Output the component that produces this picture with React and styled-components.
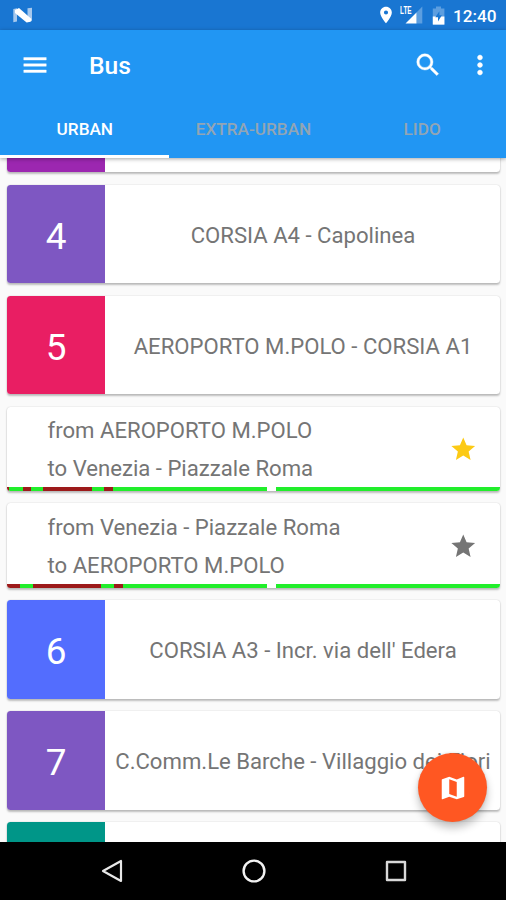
import React from "react";
import styled, { createGlobalStyle } from "styled-components";

const GlobalStyle = createGlobalStyle`
  * { box-sizing: border-box; }
  body { margin: 0; background: #fafafa; font-family: Roboto, "Liberation Sans", sans-serif; }
  svg { display: block; flex: none; }
`;

const Screen = styled.div`
  position: relative;
  width: 506px;
  height: 900px;
  display: flex;
  flex-direction: column;
  overflow: hidden;
  background: #fafafa;
`;

const StatusBar = styled.div`
  height: 30px;
  flex: none;
  display: flex;
  align-items: center;
  justify-content: space-between;
  padding: 0 9px 0 12px;
  background: #1976d2;
  color: #fff;
`;

const StatusIcons = styled.div`
  display: flex;
  align-items: center;
  height: 30px;
`;

const Clock = styled.span`
  width: 44px;
  margin-left: 8px;
  font-size: 17.2px;
  font-weight: 500;
  line-height: 30px;
  padding-top: 2px;
  white-space: nowrap;
`;

const Header = styled.header`
  position: relative;
  z-index: 1;
  flex: none;
  height: 128px;
  background: #2196f3;
  box-shadow: 0 1px 4px rgba(0, 0, 0, 0.35);
`;

const Toolbar = styled.div`
  height: 69px;
  display: flex;
  align-items: center;
  padding: 0 11px 0 20px;
`;

const Title = styled.h1`
  flex: 1;
  margin: 3px 0 0 39px;
  font-size: 24.6px;
  line-height: 30px;
  font-weight: 500;
  color: #fff;
`;

const IconButton = styled.button`
  display: flex;
  padding: 0;
  margin: 0 0 0 ${(p) => p.$gap || 0}px;
  border: 0;
  background: none;
  color: #fff;
`;

const Tabs = styled.nav`
  height: 59px;
  display: grid;
  grid-template-columns: repeat(3, 1fr);
`;

const Tab = styled.div`
  display: flex;
  align-items: center;
  justify-content: center;
  padding: 4px 0 0 1px;
  border-bottom: 3px solid ${(p) => (p.$active ? "#fff" : "transparent")};
  font-size: 17.2px;
  font-weight: 500;
  color: ${(p) => (p.$active ? "#fff" : "#92a5b4")};
`;

const Viewport = styled.main`
  flex: 1;
  min-height: 0;
  overflow: hidden;
  padding: 0 6px 0 7px;
`;

const List = styled.div`
  display: flex;
  flex-direction: column;
  gap: 12.4px;
  margin-top: -84.2px;
`;

const Card = styled.div`
  flex: none;
  background: #fff;
  border-radius: 3.5px;
  box-shadow: 0 1.5px 2px rgba(0, 0, 0, 0.24), 0 0 1.5px rgba(0, 0, 0, 0.14);
  overflow: hidden;
  color: #757575;
  font-size: 22.13px;
`;

const LineCard = styled(Card)`
  display: flex;
  height: 98.6px;
`;

const LineNumber = styled.div`
  width: 98px;
  flex: none;
  display: flex;
  align-items: center;
  justify-content: center;
  padding-top: 4px;
  background: ${(p) => p.$color};
  color: #fff;
  font-size: 36.9px;
`;

const LineName = styled.div`
  flex: 1;
  display: flex;
  align-items: center;
  justify-content: center;
  padding: 1px 0 0 1px;
  white-space: nowrap;
`;

const DirectionCard = styled(Card)`
  height: 84.2px;
  display: flex;
  flex-direction: column;
`;

const DirectionBody = styled.div`
  flex: 1;
  display: flex;
  align-items: center;
  justify-content: space-between;
  padding: 4.5px 22.5px 0 40.5px;
`;

const Route = styled.div`
  line-height: 38px;
  white-space: nowrap;
`;

const Timeline = styled.div`
  display: flex;
  height: 4px;
`;

const Segment = styled.div`
  width: ${(p) => p.$w}px;
  flex: none;
  background: ${(p) => p.$color};
`;

const Fab = styled.button`
  position: absolute;
  z-index: 2;
  left: 418px;
  top: 753px;
  width: 69px;
  height: 69px;
  padding: 0;
  border: 0;
  border-radius: 50%;
  display: flex;
  align-items: center;
  justify-content: center;
  background: #ff5722;
  box-shadow: 0 6px 9px rgba(0, 0, 0, 0.24), 0 0 3px rgba(0, 0, 0, 0.12);
`;

const NavBar = styled.footer`
  height: 58px;
  flex: none;
  display: flex;
  align-items: center;
  justify-content: center;
  gap: 117px;
  padding-left: 1px;
  background: #000;
`;

const GREEN = "#21ee2b";
const RED = "#9c1a1a";

const outbound = [[2, RED], [14, GREEN], [8, RED], [12, GREEN], [49, RED], [12, GREEN], [9, RED], [154, GREEN], [8.5, "#fff"], [225, GREEN]];
const inbound = [[13, RED], [13, GREEN], [68, RED], [13, GREEN], [9, RED], [144, GREEN], [8.5, "#fff"], [225, GREEN]];

const rows = [
  { number: "", color: "#9c27b0", name: "" },
  { number: "4", color: "#7e57c2", name: "CORSIA A4 - Capolinea" },
  { number: "5", color: "#e91e63", name: "AEROPORTO M.POLO - CORSIA A1" },
  { from: "AEROPORTO M.POLO", to: "Venezia - Piazzale Roma", star: "#fcca15", segments: outbound },
  { from: "Venezia - Piazzale Roma", to: "AEROPORTO M.POLO", star: "#757575", segments: inbound },
  { number: "6", color: "#536dfe", name: "CORSIA A3 - Incr. via dell' Edera" },
  { number: "7", color: "#7e57c2", name: "C.Comm.Le Barche - Villaggio dei Fiori" },
  { number: "", color: "#009688", name: "" },
];

function Icon({ size, d, color = "#fff", stroke = 0 }) {
  return (
    <svg width={size} height={size} viewBox="0 0 24 24" fill={color} stroke={color} strokeWidth={stroke}>
      <path d={d} />
    </svg>
  );
}

const MENU = "M3 18h18v-2H3v2zm0-5h18v-2H3v2zm0-7v2h18V6H3z";
const SEARCH =
  "M15.5 14h-.79l-.28-.27A6.471 6.471 0 0 0 16 9.5 6.5 6.5 0 1 0 9.5 16c1.61 0 3.09-.59 4.23-1.57l.27.28v.79l5 4.99L20.49 19l-4.99-5zm-6 0C7.01 14 5 11.99 5 9.5S7.01 5 9.5 5 14 7.01 14 9.5 11.99 14 9.5 14z";
const MORE =
  "M12 8c1.1 0 2-.9 2-2s-.9-2-2-2-2 .9-2 2 .9 2 2 2zm0 2c-1.1 0-2 .9-2 2s.9 2 2 2 2-.9 2-2-.9-2-2-2zm0 6c-1.1 0-2 .9-2 2s.9 2 2 2 2-.9 2-2-.9-2-2-2z";
const STAR = "M12 17.27L18.18 21l-1.64-7.03L22 9.24l-7.19-.61L12 2 9.19 8.63 2 9.24l5.46 4.73L5.82 21z";
const MAP =
  "M20.5 3l-.16.03L15 5.1 9 3 3.36 4.9c-.21.07-.36.25-.36.48V20.5c0 .28.22.5.5.5l.16-.03L9 18.9l6 2.1 5.64-1.9c.21-.07.36-.25.36-.48V3.5c0-.28-.22-.5-.5-.5zM15 19l-6-2.11V5l6 2.11V19z";
const PIN =
  "M12 2C8.13 2 5 5.13 5 9c0 5.25 7 13 7 13s7-7.75 7-13c0-3.87-3.13-7-7-7zm0 9.5a2.5 2.5 0 0 1 0-5 2.5 2.5 0 0 1 0 5z";

function NougatMark() {
  return (
    <svg width="22" height="18" viewBox="0 0 22 18">
      <path d="M1.3 3 5 2.3V15.5L1.3 16.2zM15.5 2.3 20 1.8V15L15.5 16.2z" fill="#a6c8ed" />
      <path d="M3 4 7 2 19.5 13 18.5 15.8 14.6 16.6 3 7z" fill="#fff" />
    </svg>
  );
}

const Lte = styled.span`
  align-self: flex-start;
  width: 13px;
  margin: 0 -9px 0 4px;
  padding-top: 5px;
  font-family: "Liberation Sans", sans-serif;
  font-size: 11px;
  line-height: 11px;
  font-weight: 700;
  white-space: nowrap;
  transform: scaleX(0.58);
  transform-origin: left center;
`;

function Signal() {
  return (
    <svg width="19" height="18" viewBox="0 0 19 18">
      <path d="M12.5 6.5 18.3 .5V17.5H12.5z" fill="#5c9ee0" />
      <path d="M1.5 17.5 12.5 6.5V17.5z" fill="#fff" />
    </svg>
  );
}

const BatterySvg = styled.svg`
  margin-left: 9px;
`;

function Battery() {
  return (
    <BatterySvg width="13" height="19" viewBox="0 0 13 19">
      <path d="M4 .5H9V2.5H12.4V18.6H.8V2.5H4z" fill="#5c9ee0" />
      <path d="M.8 10.5H12.4V18.6H.8z" fill="#fff" />
      <path d="M7.4 5.2 3.3 11.3H6V15.5L9.9 9.2H7.4z" fill="#1976d2" />
    </BatterySvg>
  );
}

function Line({ row }) {
  return (
    <LineCard>
      <LineNumber $color={row.color}>{row.number}</LineNumber>
      <LineName>{row.name}</LineName>
    </LineCard>
  );
}

function Direction({ row }) {
  return (
    <DirectionCard>
      <DirectionBody>
        <Route>
          <div>from {row.from}</div>
          <div>to {row.to}</div>
        </Route>
        <Icon size={28.5} d={STAR} color={row.star} />
      </DirectionBody>
      <Timeline>
        {row.segments.map(([w, color], i) => (
          <Segment key={i} $w={w} $color={color} />
        ))}
      </Timeline>
    </DirectionCard>
  );
}

export default function App() {
  return (
    <>
      <GlobalStyle />
      <Screen>
        <StatusBar>
          <NougatMark />
          <StatusIcons>
            <Icon size={20} d={PIN} />
            <Lte>LTE</Lte>
            <Signal />
            <Battery />
            <Clock>12:40</Clock>
          </StatusIcons>
        </StatusBar>
        <Header>
          <Toolbar>
            <IconButton aria-label="Menu"><Icon size={30} d={MENU} stroke={0.3} /></IconButton>
            <Title>Bus</Title>
            <IconButton aria-label="Search"><Icon size={30} d={SEARCH} stroke={0.3} /></IconButton>
            <IconButton aria-label="More" $gap={22}><Icon size={30} d={MORE} stroke={0.3} /></IconButton>
          </Toolbar>
          <Tabs>
            <Tab $active>URBAN</Tab>
            <Tab>EXTRA-URBAN</Tab>
            <Tab>LIDO</Tab>
          </Tabs>
        </Header>
        <Viewport>
          <List>
            {rows.map((row, i) => (row.from ? <Direction key={i} row={row} /> : <Line key={i} row={row} />))}
          </List>
        </Viewport>
        <Fab aria-label="Map"><Icon size={30} d={MAP} /></Fab>
        <NavBar>
          <svg width="24" height="26" viewBox="0 0 24 26" fill="none" stroke="#e8e8e8" strokeWidth="2.2" strokeLinejoin="round">
            <path d="M21 3V23L3 13z" />
          </svg>
          <svg width="26" height="26" viewBox="0 0 26 26" fill="none" stroke="#f2f2f2" strokeWidth="2.4">
            <circle cx="13" cy="13" r="10.4" />
          </svg>
          <svg width="24" height="26" viewBox="0 0 24 26" fill="none" stroke="#d8d8d8" strokeWidth="2.4" strokeLinejoin="round">
            <path d="M3 4H21V22H3z" />
          </svg>
        </NavBar>
      </Screen>
    </>
  );
}
